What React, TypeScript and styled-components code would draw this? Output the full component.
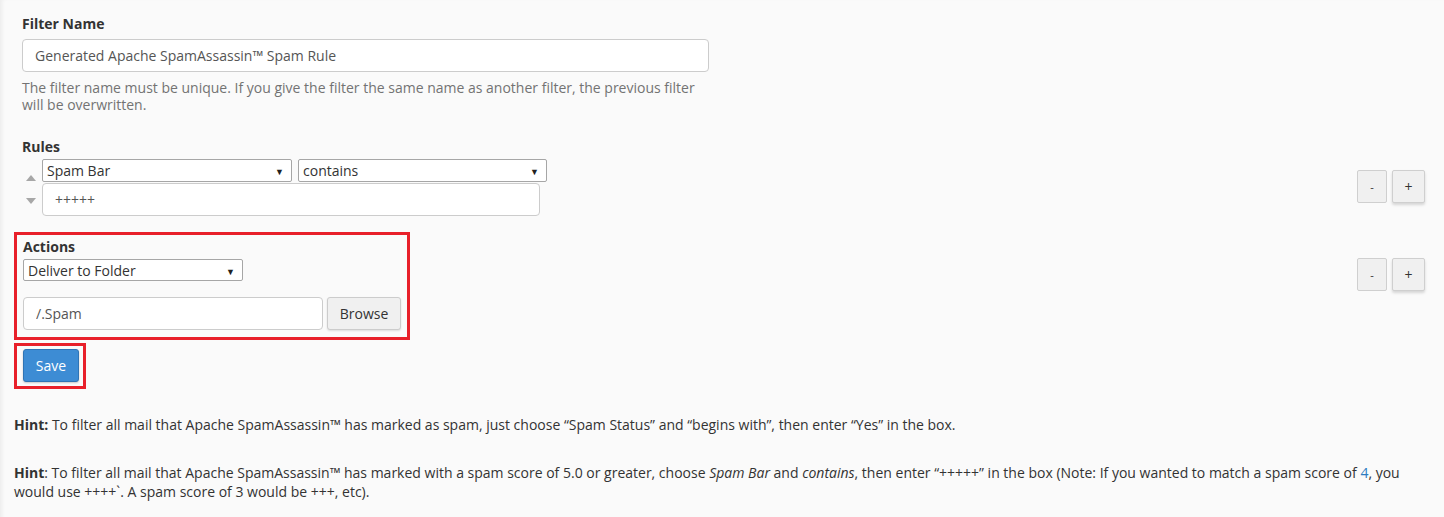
import React from "react";
import styled, { createGlobalStyle } from "styled-components";

const Global = createGlobalStyle`
  html, body { margin: 0; padding: 0; background: #fafafa; }
  body {
    font-family: "Open Sans", "Liberation Sans", sans-serif;
    color: #333;
    font-size: 14px;
  }
  * { box-sizing: border-box; }
`;

const Page = styled.div`
  min-height: 517px;
  padding: 14px 19px 20px 14px;
  background: #fafafa;
  box-shadow: inset 4px 0 4px -2px rgba(0, 0, 0, 0.06);
`;

const Field = styled.div<{ $top?: number }>`
  padding-left: 8px;
  margin-top: ${(p) => p.$top ?? 0}px;
`;

const Label = styled.div`
  font-weight: 700;
  font-size: 14px;
  line-height: 20px;
`;

const TextInput = styled.input<{ $w: number; $top?: number }>`
  display: block;
  width: ${(p) => p.$w}px;
  height: 33px;
  margin-top: ${(p) => p.$top ?? 0}px;
  border: 1px solid #ccc;
  border-radius: 4px;
  background: #fff;
  padding: 0 12px;
  font-family: "Open Sans", sans-serif;
  font-size: 14px;
  color: #555;
  outline: none;
`;

const Help = styled.p`
  margin: 7px 0 0;
  width: 687px;
  color: #737373;
  font-size: 14px;
  line-height: 17px;
`;

const Row = styled.div<{ $top?: number }>`
  display: flex;
  align-items: flex-start;
  justify-content: space-between;
  margin-top: ${(p) => p.$top ?? 0}px;
`;

const RuleBody = styled.div`
  display: flex;
  align-items: flex-start;
  padding-left: 8px;
`;

const Arrows = styled.div`
  width: 20px;
  display: flex;
  flex-direction: column;
  align-items: center;
  gap: 17px;
  padding-top: 16px;
  padding-right: 2px;
`;

const Tri = styled.span<{ $down?: boolean }>`
  width: 0;
  height: 0;
  border-left: 5px solid transparent;
  border-right: 5px solid transparent;
  ${(p) =>
    p.$down
      ? "border-top: 6px solid #a7a7a7;"
      : "border-bottom: 6px solid #a7a7a7;"}
`;

const RuleFields = styled.div`
  display: flex;
  flex-direction: column;
  gap: 1px;
`;

const SelectRow = styled.div`
  display: flex;
  gap: 6px;
`;

const SelectBox = styled.div<{ $w: number; $h?: number; $top?: number }>`
  position: relative;
  width: ${(p) => p.$w}px;
  height: ${(p) => p.$h ?? 23}px;
  margin-top: ${(p) => p.$top ?? 0}px;
  border: 1px solid #a6a6a6;
  border-radius: 2px;
  background: #fff;
  display: flex;
  align-items: center;
  padding-left: 4px;
  font-size: 14px;
  color: #333;
`;

const Caret = styled.span`
  position: absolute;
  right: 7px;
  top: 5px;
  font-size: 9px;
  color: #222;
`;

const SideButtons = styled.div<{ $top: number }>`
  display: flex;
  gap: 5px;
  margin-top: ${(p) => p.$top}px;
`;

const SmallBtn = styled.button<{ $raised?: boolean }>`
  width: ${(p) => (p.$raised ? 33 : 30)}px;
  height: 33px;
  border: 1px solid #cfcfcf;
  border-radius: 2px;
  background: #f0f0f0;
  color: #333;
  font-family: "Open Sans", sans-serif;
  font-size: ${(p) => (p.$raised ? 14 : 11)}px;
  padding: 0;
  ${(p) => (p.$raised ? "box-shadow: 0 2px 3px rgba(0,0,0,0.15);" : "")}
`;

const Highlight = styled.div<{ $w: number; $pad: string; $top?: number }>`
  width: ${(p) => p.$w}px;
  border: 3px solid #e8202a;
  padding: ${(p) => p.$pad};
  margin-top: ${(p) => p.$top ?? 0}px;
`;

const FolderRow = styled.div`
  display: flex;
  gap: 4px;
  margin-top: 16px;
`;

const Browse = styled.button`
  height: 33px;
  width: 74px;
  border: 1px solid #ccc;
  border-radius: 3px;
  background: #f0f0f0;
  box-shadow: 0 1px 2px rgba(0, 0, 0, 0.12);
  font-family: "Open Sans", sans-serif;
  font-size: 14px;
  color: #333;
  padding: 0;
`;

const SaveBtn = styled.button`
  display: block;
  height: 33px;
  width: 56px;
  border: 1px solid #2f74b5;
  border-radius: 3px;
  background: #3d8cd4;
  color: #fff;
  font-family: "Open Sans", sans-serif;
  font-size: 14px;
  padding: 0;
  box-shadow: 0 1px 2px rgba(0, 0, 0, 0.2);
`;

const Hint = styled.p<{ $top: number }>`
  margin: ${(p) => p.$top}px 0 0;
  font-size: 14px;
  line-height: 19px;
  color: #333;
  b { font-weight: 700; }
  a { color: #2d7bbf; text-decoration: none; }
`;

export default function App() {
  return (
    <>
      <Global />
      <Page>
        <Field>
          <Label>Filter Name</Label>
          <TextInput $w={687} $top={5} defaultValue="Generated Apache SpamAssassin™ Spam Rule" />
          <Help>
            The filter name must be unique. If you give the filter the same name as another filter, the previous filter
            will be overwritten.
          </Help>
        </Field>

        <Field $top={24}>
          <Label>Rules</Label>
        </Field>
        <Row $top={2}>
          <RuleBody>
            <Arrows>
              <Tri />
              <Tri $down />
            </Arrows>
            <RuleFields>
              <SelectRow>
                <SelectBox $w={250}>
                  Spam Bar<Caret>▼</Caret>
                </SelectBox>
                <SelectBox $w={249}>
                  contains<Caret>▼</Caret>
                </SelectBox>
              </SelectRow>
              <TextInput $w={498} defaultValue="+++++" />
            </RuleFields>
          </RuleBody>
          <SideButtons $top={11}>
            <SmallBtn>-</SmallBtn>
            <SmallBtn $raised>+</SmallBtn>
          </SideButtons>
        </Row>

        <Row $top={16}>
          <Highlight $w={396} $pad="2px 6px 7px 6px">
            <Label>Actions</Label>
            <SelectBox $w={220} $h={22} $top={2}>
              Deliver to Folder<Caret>▼</Caret>
            </SelectBox>
            <FolderRow>
              <TextInput $w={301} defaultValue="/.Spam" />
              <Browse>Browse</Browse>
            </FolderRow>
          </Highlight>
          <SideButtons $top={26}>
            <SmallBtn>-</SmallBtn>
            <SmallBtn $raised>+</SmallBtn>
          </SideButtons>
        </Row>

        <Highlight $w={72} $pad="3px 4px 4px 6px" $top={3}>
          <SaveBtn>Save</SaveBtn>
        </Highlight>

        <Hint $top={26}>
          <b>Hint:</b> To filter all mail that Apache SpamAssassin™ has marked as spam, just choose “Spam Status” and
          “begins with”, then enter “Yes” in the box.
        </Hint>
        <Hint $top={29}>
          <b>Hint</b>: To filter all mail that Apache SpamAssassin™ has marked with a spam score of 5.0 or greater, choose{" "}
          <i>Spam Bar</i> and <i>contains</i>, then enter “+++++” in the box (Note: If you wanted to match a spam score of{" "}
          <a>4</a>, you would use ++++`. A spam score of 3 would be +++, etc).
        </Hint>
      </Page>
    </>
  );
}
